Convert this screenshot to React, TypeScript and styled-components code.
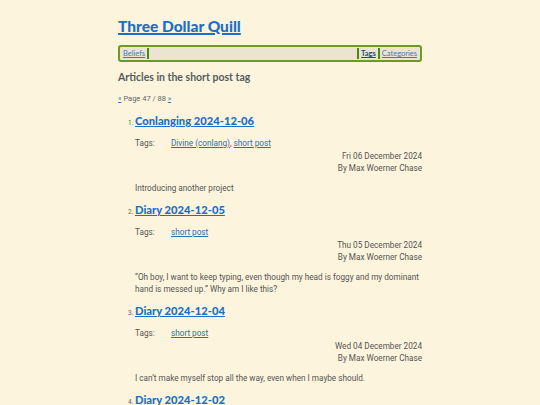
import * as React from 'react';
import styled, { createGlobalStyle } from 'styled-components';

const GlobalStyle = createGlobalStyle`
    html, body {
        margin: 0;
        padding: 0;
        background: #fcf4dc;
    }
    body {
        font-family: "Roboto", "DejaVu Sans", sans-serif;
        color: #555;
    }
`;

const Page = styled.div`
    width: 304px;
    margin: 0 auto;
    padding-top: 16px;
`;

const SiteTitle = styled.a`
    display: block;
    font-family: "Lato", "Noto Sans", sans-serif;
    font-weight: 900;
    font-size: 15.5px;
    line-height: 20px;
    color: #1a6fc6;
    text-decoration: underline;
    text-decoration-thickness: 1.5px;
`;

const Nav = styled.nav`
    margin-top: 9px;
    display: flex;
    align-items: stretch;
    height: 11px;
    border: 2px solid #6c9a22;
    border-radius: 3px;
    background: #ebe4d0;
    padding: 1px 1px;
    font-family: "Lato", "Noto Sans", sans-serif;
    font-size: 7.5px;
    line-height: 11px;
`;

const NavLink = styled.a<{ $bold?: boolean }>`
    padding: 0 2px;
    color: ${p => (p.$bold ? '#1d4f86' : '#3a7cc0')};
    font-weight: ${p => (p.$bold ? 700 : 400)};
    text-decoration: underline;
`;

const NavSep = styled.span`
    width: 2px;
    background: #4f8a10;
`;

const NavFill = styled.span`
    flex: 1;
`;

const Heading = styled.h1`
    margin: 8px 0 0;
    font-family: "Lato", "Noto Sans", sans-serif;
    font-weight: 700;
    font-size: 10.5px;
    line-height: 14px;
    color: #555c60;
`;

const Pager = styled.div`
    margin-top: 10px;
    font-size: 7.5px;
    line-height: 10px;
    color: #666;
    a {
        color: #3a7cc0;
        text-decoration: underline;
    }
`;

const List = styled.ol`
    margin: 6px 0 0;
    padding-left: 17px;
    li::marker {
        font-size: 6.5px;
        color: #666;
    }
`;

const Item = styled.li`
    margin-bottom: 5px;
`;

const PostTitle = styled.a`
    font-family: "Lato", "Noto Sans", sans-serif;
    font-weight: 900;
    font-size: 11.2px;
    line-height: 16px;
    color: #1a6fc6;
    text-decoration: underline;
`;

const TagRow = styled.div`
    margin-top: 8px;
    display: grid;
    grid-template-columns: 36px 1fr;
    font-size: 8.2px;
    line-height: 12px;
    a {
        color: #2f6db3;
        text-decoration: underline;
    }
`;

const Meta = styled.div`
    text-align: right;
    font-size: 8.2px;
    line-height: 12px;
    margin-top: 1px;
`;

const Summary = styled.p`
    margin: 8px 0 0;
    font-size: 8.2px;
    line-height: 12px;
`;

type Post = {
    title: string;
    tags: string[];
    date: string;
    summary: string;
};

const posts: Post[] = [
    {
        title: 'Conlanging 2024-12-06',
        tags: ['Divine (conlang)', 'short post'],
        date: 'Fri 06 December 2024',
        summary: 'Introducing another project',
    },
    {
        title: 'Diary 2024-12-05',
        tags: ['short post'],
        date: 'Thu 05 December 2024',
        summary:
            '\u201cOh boy, I want to keep typing, even though my head is foggy and my dominant hand is messed up.\u201d Why am I like this?',
    },
    {
        title: 'Diary 2024-12-04',
        tags: ['short post'],
        date: 'Wed 04 December 2024',
        summary: 'I can\u2019t make myself stop all the way, even when I maybe should.',
    },
    {
        title: 'Diary 2024-12-02',
        tags: ['short post'],
        date: 'Mon 02 December 2024',
        summary: 'Slowly getting back into things.',
    },
];

export default function App() {
    return (
        <>
            <GlobalStyle />
            <Page>
                <SiteTitle href="#">Three Dollar Quill</SiteTitle>
                <Nav>
                    <NavLink href="#">Beliefs</NavLink>
                    <NavSep />
                    <NavFill />
                    <NavSep />
                    <NavLink href="#" $bold>Tags</NavLink>
                    <NavSep />
                    <NavLink href="#">Categories</NavLink>
                </Nav>
                <Heading>Articles in the short post tag</Heading>
                <Pager>
                    <a href="#">«</a> Page 47 / 88 <a href="#">»</a>
                </Pager>
                <List>
                    {posts.map(post => (
                        <Item key={post.title}>
                            <PostTitle href="#">{post.title}</PostTitle>
                            <TagRow>
                                <span>Tags:</span>
                                <span>
                                    {post.tags.map((t, i) => (
                                        <React.Fragment key={t}>
                                            {i > 0 && ', '}
                                            <a href="#">{t}</a>
                                        </React.Fragment>
                                    ))}
                                </span>
                            </TagRow>
                            <Meta>
                                {post.date}
                                <br />
                                By Max Woerner Chase
                            </Meta>
                            <Summary>{post.summary}</Summary>
                        </Item>
                    ))}
                </List>
            </Page>
        </>
    );
}
